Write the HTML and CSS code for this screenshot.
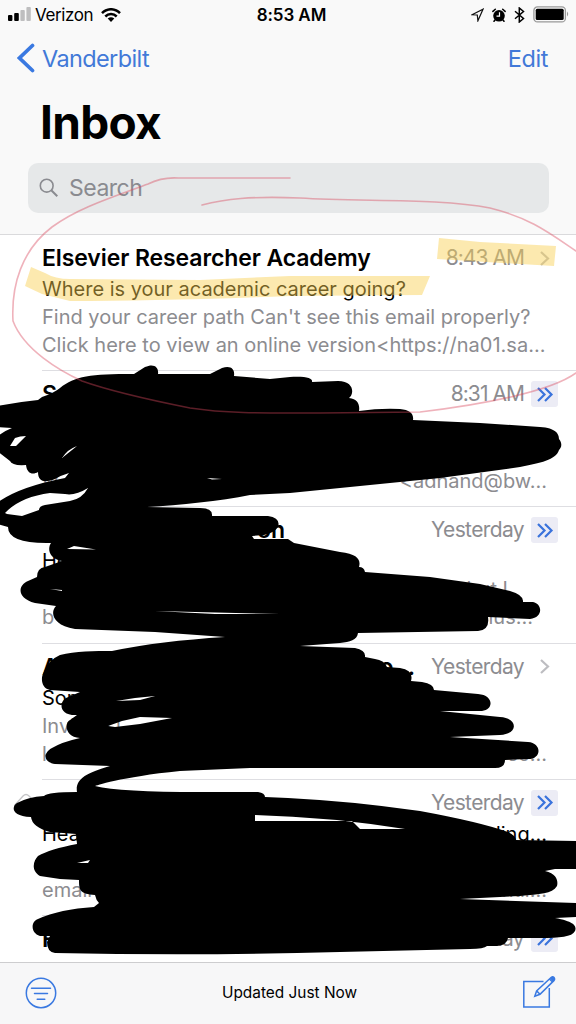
FILE: index.html
```html
<!DOCTYPE html>
<html lang="en">
<head>
<meta charset="utf-8">
<title>Inbox</title>
<link rel="stylesheet" href="styles.css">
</head>
<body>
<div class="phone">
  <header class="header">
    <div class="status">
      <div class="status-left">
        <svg class="signal" width="24" height="15" viewBox="0 0 24 15"><rect x="0" y="8" width="4.4" height="6" rx="1"/><rect x="6.2" y="6" width="4.6" height="8" rx="1"/><g fill="#bebebf"><rect x="12.4" y="3" width="4.4" height="11" rx="1"/><rect x="18.4" y="0" width="4.4" height="14" rx="1"/></g></svg>
        <span class="carrier">Verizon</span>
        <svg width="20" height="14" viewBox="0 0 20 14"><g fill="none" stroke="#000" stroke-width="2.5"><path d="M1 5.2C6-.1 14-.1 19 5.2M4.3 8.5c3.2-3.2 8.2-3.2 11.4 0"/></g><path d="M6.7 10.6q3.3-2.7 6.6 0L10 14z"/></svg>
      </div>
      <span class="clock">8:53 AM</span>
      <div class="status-right">
        <svg width="13" height="14" viewBox="0 0 13 14"><path d="M1 6.8 12 1.2 6.9 12.8 6.3 7z" fill="none" stroke="#111" stroke-width="1.2"/></svg>
        <svg width="14" height="14" viewBox="0 0 14 14"><circle cx="7" cy="7.8" r="5.8"/><path d="M.9 3.4 3.3 1.2M13.100 3.400 10.700 1.200M3 12l-1 1.300M11 12l1 1.300" stroke="#000" stroke-width="1.500" stroke-linecap="round"/><path d="M7.500 4.200v4H4.500" fill="none" stroke="#fff" stroke-width="1.200"/></svg>
        <svg width="11" height="16" viewBox="0 0 11 16"><path d="M1 4.300l8.500 7.200L5.300 15V1l4.200 3.500L1 11.700" fill="none" stroke="#000" stroke-width="1.500"/></svg>
        <svg width="37" height="17" viewBox="0 0 37 17"><rect x=".9" y=".9" width="31.500" height="15" rx="3.500" fill="none" stroke="#999" stroke-width="1.300"/><rect x="2.700" y="2.800" width="28" height="11.200" rx="1.500"/><path d="M34 5.500q2.400 2.500 0 5z" fill="#999"/></svg>
      </div>
    </div>
    <nav class="nav">
      <a class="back"><svg width="18" height="30" viewBox="0 0 18 30"><path d="M15.500 2.500 2.500 15l13 12.500" fill="none" stroke="#3a79e1" stroke-width="3.700" stroke-linecap="round" stroke-linejoin="miter"/></svg><span>Vanderbilt</span></a>
      <a class="edit">Edit</a>
    </nav>
    <h1 class="title">Inbox</h1>
    <div class="search">
      <svg width="20" height="20" viewBox="0 0 20 20"><g fill="none" stroke="#8a8b90" stroke-width="1.600"><circle cx="7.700" cy="7.700" r="6.400"/><path d="m12.300 12.300 6 6" stroke-width="2"/></g></svg>
      <span>Search</span>
    </div>
  </header>

  <main class="list">
    <article class="mail">
      <div class="line sender"><b>Elsevier Researcher Academy</b><span class="when"><time class="am">8:43 AM</time><i class="mark"><svg width="12" height="17" viewBox="0 0 12 17"><path d="m2 2 7 6.500L2 15" class="grey-arrow"/></svg></i></span></div>
      <div class="line subject"><span>Where is your academic career going?</span></div>
      <div class="line preview"><span>Find your career path Can't see this email properly?</span></div>
      <div class="line preview"><span>Click here to view an online version&lt;https://na01.sa...</span></div>
    </article>
    <article class="mail">
      <div class="line sender"><b>S</b><span class="when"><time class="am">8:31 AM</time><i class="mark vip"><svg width="18" height="17" viewBox="0 0 18 17"><path d="m2 2 6.500 6.500L2 15M9 2l6.500 6.500L9 15"/></svg></i></span></div>
      <div class="line subject"></div>
      <div class="line preview"></div>
      <div class="line preview"><span>w</span><span>&lt;adnand@bw...</span></div>
    </article>
    <article class="mail">
      <div class="line sender"><b class="tail">on</b><span class="when"><time>Yesterday</time><i class="mark vip"><svg width="18" height="17" viewBox="0 0 18 17"><path d="m2 2 6.500 6.500L2 15M9 2l6.500 6.500L9 15"/></svg></i></span></div>
      <div class="line subject"><span>He</span></div>
      <div class="line preview inset-wide"><span></span><span>but I</span></div>
      <div class="line preview inset"><span>b</span><span>plus...</span></div>
    </article>
    <article class="mail">
      <div class="line sender"><b>A</b><b class="ending">o...</b><span class="when"><time>Yesterday</time><i class="mark"><svg width="12" height="17" viewBox="0 0 12 17"><path d="m2 2 7 6.500L2 15" class="grey-arrow"/></svg></i></span></div>
      <div class="line subject"><span>Som</span></div>
      <div class="line preview"><span>Inviting l</span></div>
      <div class="line preview"><span>k</span><span>se...</span></div>
    </article>
    <article class="mail">
      <svg class="reply" width="24" height="24" viewBox="0 0 24 24"><path d="M0 13 9 3q3-3 6 0l7 7" fill="none" stroke="#c5c5c7" stroke-width="1.300"/></svg>
      <div class="line sender"><b></b><span class="when"><time>Yesterday</time><i class="mark vip"><svg width="18" height="17" viewBox="0 0 18 17"><path d="m2 2 6.500 6.500L2 15M9 2l6.500 6.500L9 15"/></svg></i></span></div>
      <div class="line subject"><span>Hea</span><span>ding...</span></div>
      <div class="line preview"></div>
      <div class="line preview"><span>email</span><span>until...</span></div>
    </article>
    <article class="mail">
      <div class="line sender"><b>F</b><span class="when"><time>Yesterday</time><i class="mark vip"><svg width="18" height="17" viewBox="0 0 18 17"><path d="m2 2 6.500 6.500L2 15M9 2l6.500 6.500L9 15"/></svg></i></span></div>
    </article>
  </main>

  <footer class="toolbar">
    <svg width="32" height="32" viewBox="0 0 32 32"><g fill="none" stroke="#3a79e1" stroke-width="1.500"><circle cx="16" cy="16" r="14.700"/><path d="M6.500 11.200h19M9.500 16.500h13M12.200 22.300h7.600" stroke-linecap="round"/></g></svg>
    <span>Updated Just Now</span>
    <svg width="34" height="34" viewBox="0 0 34 34"><g fill="none" stroke="#3a79e1" stroke-width="1.500"><path d="M21.500 5.500H1.800V31h25.500V12"/><path d="m12.800 20.200 1.800-5.300L29.300 1.300q1.500-1 2.800.3 1 1.400 0 2.800L18 18.300zM14.600 14.900l3.400 3.400M27.500 3l3.200 3.200"/></g><path d="m28 2.500 1.300-1.200q1.500-1 2.800.3 1 1.400 0 2.800L30.800 5.700z" fill="#3a79e1"/></svg>
  </footer>

  <svg class="markup" width="576" height="1024" viewBox="0 0 576 1024">
    <g fill="#f9d050" fill-opacity=".46">
      <path d="M31 267 45 273Q55 279 70 279L200 280 290 276 430 276 422 295 290 296Q160 301 70 301L42 294 25 286Z"/>
      <path d="M439 238 480 242 556 246 554 266 520 264 470 261 437 259Z"/>
    </g>
    <path fill-rule="evenodd" d="M-3 406Q18 402 38 400L42 397Q54 393 60 388C75 376 90 374 134 374L145 367C154 363 159 367 158 374L210 374 222 368C231 365 235 369 234 376L270 379 290 377C308 376 313 379 312 382L338 381C355 381 354 395 349 398C358 399 360 405 359 411Q380 408 400 409C410 410 414 414 413 420L480 423 540 427C556 428 559 434 559 439C563 444 561 448 559 450C556 460 540 463 520 467L440 478 370 485 290 493 250 495C220 501 180 505 147 507L200 508Q213 508 212 516L268 516Q281 518 278 527Q274 533 264 535L252 536 254 539 288 539 294 543 340 552C358 554 361 560 359 567Q364 567 365 572L430 577 480 584 510 591Q524 595 523 602L533 602C543 604 543 618 530 619L488 617Q490 630 478 631L358 633C357 640 350 642 340 643L300 646 355 648Q366 650 365 657L375 659Q384 660 387 667L400 668Q414 670 411 681L422 682Q434 684 434 690L478 694C494 695 494 710 482 711L440 711 500 717C518 718 519 734 500 735L450 737 528 742C542 743 542 759 528 759L505 760Q505 768 495 768L250 768 180 771C120 777 95 786 95 786Q120 792 200 792L258 792Q265 793 265 797L288 798Q350 801 420 811 480 822 508 832Q516 836 516 840L576 841V869L555 869 545 871C558 874 558 882 557 886C552 894 540 894 520 896L460 899 576 903V917L555 918C578 922 576 928 575 931C572 937 560 938 540 938L508 938Q507 945 497 946L487 946Q484 949 470 949L340 952Q200 956 55 953Q47 952 47 942L50 936 40 936C30 933 31 921 38 919Q60 909 94 907L99 903Q96 900 95 895C80 894 79 890 79 880L60 879 40 876C30 870 34 860 38 856Q50 849 77 844L76 834 50 832Q32 827 31 817C10 816 12 806 17 803Q28 797 44 796Q48 792 77 792C75 780 85 773 110 766L55 764C42 762 44 752 52 748Q62 742 80 738C65 737 64 723 70 720L77 715C60 716 58 703 66 698L80 692 50 690C41 688 41 678 43 674Q48 660 60 655C75 651 95 651 112 651Q160 641 225 637L155 632 75 629C52 625 50 612 56 606L35 603C16 598 18 585 28 581L37 577Q37 568 45 567L62 561C47 558 48 547 51 543Q8 544 8 527L-3 524V503Q18 487 65 478L69 473Q62 475 55 479C45 483 38 482 38 472C33 475 27 474 26 465Q12 466 10 461L-3 451V437Q4 431 12 428L-3 427Z M5 513Q20 497 50 493L65 494Q75 496 88 488Q82 499 70 501L45 505Q39 506 39 510L22 516 7 514Z M10 446 15 438Q20 436 26 436L16 446Z M62 458Q68 449 77 446Z M67 549 74 546 96 549.500Z M50 589 62 590V591Z M155 611 280 614 215 614Z M116 701 135 698 155 696 140 700Z M108 726 122 721 140 717 172 718 140 724 115 727Z M255 815Q330 817 405 829L360 829 352 821 255 821Z M77 863 90 860 88 863Z M207 478 222 479 212 479.500Z"/>
    <g fill="none" stroke="#d9485c" stroke-opacity=".42" stroke-width="1.600" stroke-linecap="round">
      <path d="M290 178H178Q162 177 148 184C110 198 78 208 52 227 22 250 11 285 13 321C24 350 60 371 82 381 110 391 160 402 190 408 230 414 270 413 320 413L420 412C480 405 550 392 576 373"/>
      <path d="M202 205C225 199 250 196 300 198C360 202 440 198 490 208C530 218 548 232 576 251"/>
    </g>
  </svg>
</div>
</body>
</html>
```
FILE: styles.css
```css
* { box-sizing: border-box; }
body { margin: 0; font-family: Inter, "Liberation Sans", sans-serif; color: #000; background: #fff; }
svg { display: block; flex: none; }
.phone { position: relative; width: 576px; height: 1024px; overflow: hidden; display: flex; flex-direction: column; }
.header { height: 235px; flex: none; background: #f9f9f9; border-bottom: 1px solid #dadadc; }
.status { height: 29px; display: grid; grid-template-columns: 1fr auto 1fr; align-items: center; padding: 0 6px 0 8px; }
.status-left { display: flex; align-items: center; }
.carrier { font-size: 17px; letter-spacing: -.4px; margin: 1px 8px 0 3px; }
.clock { font-size: 17px; font-weight: 600; letter-spacing: -.1px; margin: 1px 0 0 5px; }
.status-right { display: flex; align-items: center; justify-content: flex-end; gap: 8px; }
.nav { height: 58px; display: flex; align-items: center; justify-content: space-between; padding: 0 28px 0 17px; color: #4279d8; font-size: 23.500px; }
.back { display: flex; align-items: center; gap: 7px; letter-spacing: -.62px; }
.edit { letter-spacing: -.4px; }
.title { margin: 0 0 0 40px; height: 76px; line-height: 71px; font-size: 46px; font-weight: 700; letter-spacing: -.700px; }
.search { margin: 0 27px 0 28px; height: 50px; border-radius: 10px; background: #e6e8e9; display: flex; align-items: center; gap: 10px; padding-left: 11px; color: #8a8b90; font-size: 23px; letter-spacing: -.5px; }
.list { flex: 1; min-height: 0; overflow: hidden; }
.mail { position: relative; height: 136.200px; margin-left: 42px; padding-top: 8px; border-bottom: 1px solid #dedee2; }
.line { height: 28px; line-height: 28px; display: flex; justify-content: space-between; white-space: nowrap; padding-right: 29px; }
.sender { height: 30px; margin-bottom: 2px; align-items: center; padding-right: 18px; }
.sender b { font-size: 23px; font-weight: 600; letter-spacing: -.1px; }
.sender .tail { padding-left: 215px; }
.sender .ending { margin: 0 16px 0 auto; }
.when { display: flex; align-items: center; gap: 7px; color: #8c8c90; font-size: 21px; letter-spacing: -.62px; }
.am { letter-spacing: -.95px; }
.mark { width: 27px; height: 26px; border-radius: 3px; display: flex; align-items: center; justify-content: center; }
.mark path { fill: none; stroke: #3a73dc; stroke-width: 2.200; }
.mark .grey-arrow { stroke: #bdbdc1; }
.vip { background: #ececf5; }
.subject { font-size: 20px; }
.preview { font-size: 20px; color: #8c8c90; }
.inset { padding-right: 43px; }
.inset-wide { padding-right: 68px; }
.reply { position: absolute; left: -28px; top: 13px; }
.toolbar { position: relative; height: 62px; flex: none; display: flex; align-items: center; justify-content: space-between; padding: 0 20px 2px 25px; background: #f7f7f8; border-top: 1px solid #cdcdcf; font-size: 15.400px; }
.markup { position: absolute; left: 0; top: 0; pointer-events: none; }
```
